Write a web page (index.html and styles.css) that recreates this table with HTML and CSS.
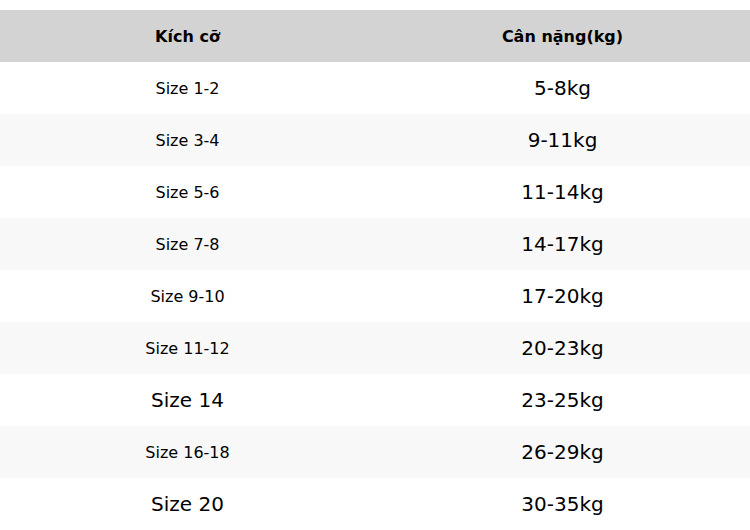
FILE: index.html
```html
<!DOCTYPE html>
<html lang="vi">
<head>
<meta charset="utf-8">
<link rel="stylesheet" href="styles.css">
</head>
<body>
<table class="size-table">
  <thead>
    <tr><th>Kích cỡ</th><th>Cân nặng(kg)</th></tr>
  </thead>
  <tbody>
    <tr><td>Size 1-2</td><td class="big">5-8kg</td></tr>
    <tr><td>Size 3-4</td><td class="big">9-11kg</td></tr>
    <tr><td>Size 5-6</td><td class="big">11-14kg</td></tr>
    <tr><td>Size 7-8</td><td class="big">14-17kg</td></tr>
    <tr><td>Size 9-10</td><td class="big">17-20kg</td></tr>
    <tr><td>Size 11-12</td><td class="big">20-23kg</td></tr>
    <tr><td class="big">Size 14</td><td class="big">23-25kg</td></tr>
    <tr><td>Size 16-18</td><td class="big">26-29kg</td></tr>
    <tr><td class="big">Size 20</td><td class="big">30-35kg</td></tr>
  </tbody>
</table>
</body>
</html>
```
FILE: styles.css
```css
html, body {
  margin: 0;
  padding: 0;
  background: #ffffff;
}
body {
  padding-top: 10px;
  font-family: "DejaVu Sans", sans-serif;
  color: #000;
}
.size-table {
  width: 750px;
  border-collapse: collapse;
  table-layout: fixed;
}
.size-table th,
.size-table td {
  height: 52px;
  padding: 0;
  text-align: center;
  vertical-align: middle;
  font-size: 16px;
}
.size-table th {
  background: #d3d3d3;
  font-weight: bold;
}
.size-table tbody tr:nth-child(even) {
  background: #f8f8f8;
}
.size-table td.big {
  font-size: 20px;
}
```
